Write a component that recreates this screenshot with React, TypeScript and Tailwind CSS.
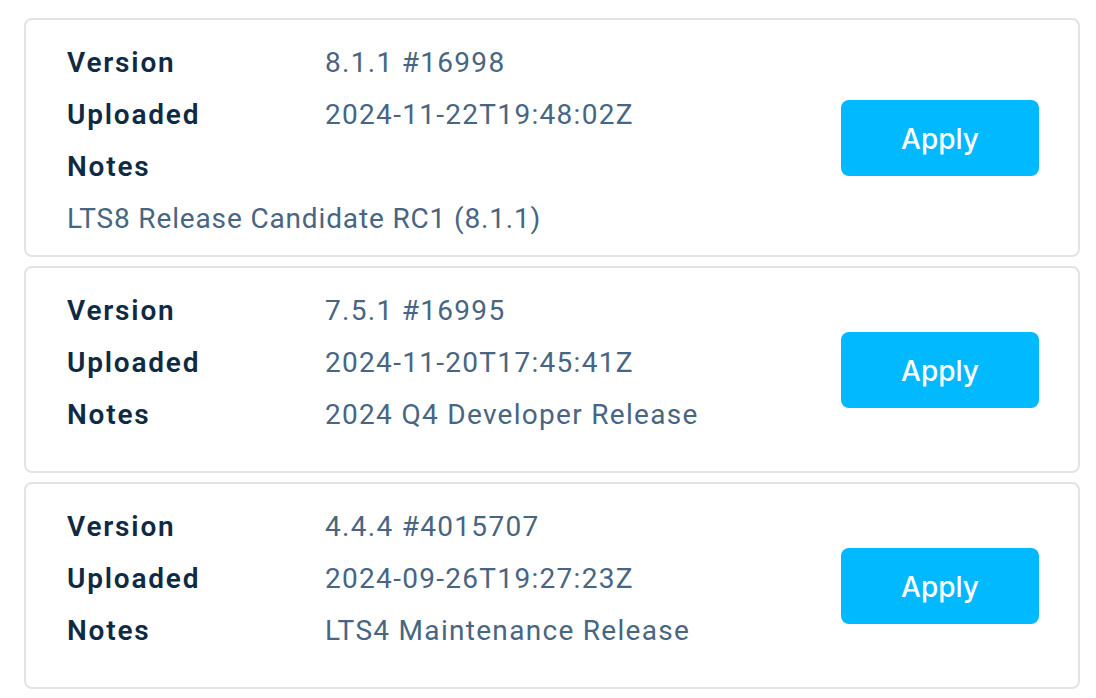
import React from "react";

type Item = { version: string; uploaded: string; notes: string; notesBelow?: boolean; h: string };

const items: Item[] = [
  { version: "8.1.1 #16998", uploaded: "2024-11-22T19:48:02Z", notes: "LTS8 Release Candidate RC1 (8.1.1)", notesBelow: true, h: "h-[239px]" },
  { version: "7.5.1 #16995", uploaded: "2024-11-20T17:45:41Z", notes: "2024 Q4 Developer Release", h: "h-[207px]" },
  { version: "4.4.4 #4015707", uploaded: "2024-09-26T19:27:23Z", notes: "LTS4 Maintenance Release", h: "h-[207px]" },
];

function Row({ label, value }: { label: string; value?: string }) {
  return (
    <div className="flex h-[52px] items-center">
      <div className="w-[258px] font-semibold tracking-[1.8px] text-[#102a43]">{label}</div>
      {value && <div className="font-normal tracking-[1.3px] text-[#486581]">{value}</div>}
    </div>
  );
}

export default function App() {
  return (
    <div className="min-h-[698px] bg-white pl-[24px] pr-[16px] pt-[18px]" style={{ fontFamily: "Roboto, 'Noto Sans', sans-serif" }}>
      <div className="flex flex-col gap-[9px]">
        {items.map((it) => (
          <div
            key={it.version}
            className={`flex ${it.h} items-stretch rounded-[8px] border-2 border-[#e3e3e3] pl-[41px] pr-[39px] pt-[17px]`}
          >
            <div className="flex flex-1 flex-col text-[28px] leading-[52px]">
              <Row label="Version" value={it.version} />
              <Row label="Uploaded" value={it.uploaded} />
              {it.notesBelow ? (
                <>
                  <Row label="Notes" />
                  <div className="flex h-[52px] items-center tracking-[0.85px] text-[#486581]">{it.notes}</div>
                </>
              ) : (
                <Row label="Notes" value={it.notes} />
              )}
            </div>
            <div className="flex items-center pb-[17px]">
              <button
                className="flex h-[76px] w-[198px] items-center justify-center rounded-[8px] bg-[#00b9ff] pt-[2px] text-[28px] font-medium text-white"
                style={{ fontFamily: "Inter, sans-serif" }}
              >
                Apply
              </button>
            </div>
          </div>
        ))}
      </div>
    </div>
  );
}
